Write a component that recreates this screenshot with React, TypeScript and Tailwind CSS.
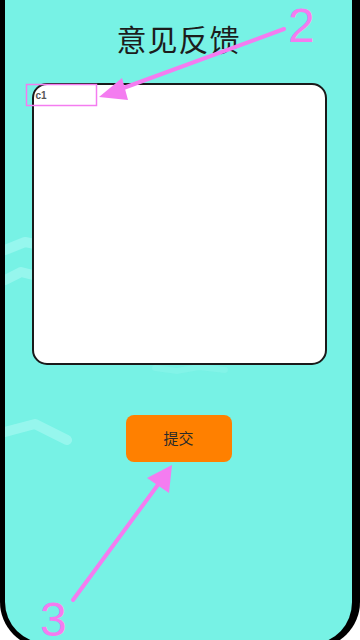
import { FC } from "react";

const PINK = "#f47cf0";

const Waves: FC = () => (
    <svg
        className="pointer-events-none absolute inset-0"
        width="360"
        height="640"
        viewBox="0 0 360 640"
    >
        <g
            fill="none"
            stroke="#9ef8f0"
            strokeWidth="10"
            strokeLinecap="round"
            strokeLinejoin="round"
            opacity="0.8"
        >
            <polyline points="0,250 20,242 40,246" />
            <polyline points="0,280 16,272 40,278" />
            <polyline points="0,432 30,424 62,440" />
        </g>
        <polyline
            points="150,368 172,371 194,367 220,370"
            fill="none"
            stroke="#8ef6ec"
            strokeWidth="6"
            strokeLinecap="round"
            opacity="0.5"
        />
    </svg>
);

const Annotations: FC = () => (
    <>
        <svg
            className="pointer-events-none absolute inset-0"
            width="360"
            height="640"
            viewBox="0 0 360 640"
        >
            <rect
                x="26.5"
                y="84.5"
                width="70"
                height="21"
                fill="none"
                stroke={PINK}
                strokeWidth="1.5"
            />
            <line
                x1="284"
                y1="29"
                x2="118"
                y2="90"
                stroke={PINK}
                strokeWidth="4"
                strokeLinecap="round"
            />
            <polygon points="99,97 122,78 128,100" fill={PINK} />
            <line
                x1="73"
                y1="600"
                x2="160"
                y2="482"
                stroke={PINK}
                strokeWidth="4"
                strokeLinecap="round"
            />
            <polygon points="172,465 147,478 169,493" fill={PINK} />
        </svg>
        <span className="pointer-events-none absolute left-[288px] top-[2px] font-['Liberation_Sans',sans-serif] text-[48px] leading-none text-[#f47cf0]">
            2
        </span>
        <span className="pointer-events-none absolute left-[40px] top-[596px] font-['Liberation_Sans',sans-serif] text-[48px] leading-none text-[#f47cf0]">
            3
        </span>
    </>
);

export default function App() {
    return (
        <div className="relative h-[640px] w-[360px] overflow-hidden bg-white">
            <div className="relative flex h-[648px] flex-col items-center rounded-b-[46px] border-b-[5px] border-l-[5px] border-r-[8px] border-black bg-[#77f2e5] font-['Noto_Sans_CJK_SC',sans-serif]">
                <Waves />
                <h1 className="relative mt-[18px] text-[30px] leading-[40px] font-normal tracking-[1px] text-[#1c1c1c]">
                    意见反馈
                </h1>
                <div className="relative mt-[25px] ml-[1px] h-[282px] w-[295px] rounded-[15px] border-2 border-[#1a1a1a] bg-white">
                    <p className="absolute left-[2px] top-[3px] font-['Liberation_Sans',sans-serif] text-[10px] font-bold text-[#555]">
                        c1
                    </p>
                </div>
                <button className="relative mt-[50px] flex h-[47px] w-[106px] items-center justify-center rounded-[8px] bg-[#ff8000] text-[15px] text-[#2a2a2a]">
                    提交
                </button>
            </div>
            <Annotations />
        </div>
    );
}
